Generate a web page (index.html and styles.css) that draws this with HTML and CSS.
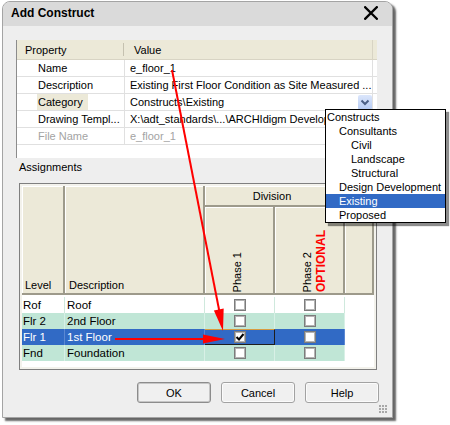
FILE: index.html
```html
<!DOCTYPE html>
<html>
<head>
<meta charset="utf-8">
<link rel="stylesheet" href="styles.css">
</head>
<body>
<div class="window">
  <div class="titlebar">
    <span class="title">Add Construct</span>
    <svg class="close" width="14" height="14" viewBox="0 0 14 14"><path d="M1.2 1.2L12.8 12.8M12.8 1.2L1.2 12.8" stroke="#000" stroke-width="2.3" stroke-linecap="square"/></svg>
  </div>
  <div class="content">
    <div class="pgrid">
      <div class="prow phead"><div class="pc1">Property</div><div class="pc2">Value</div></div>
      <div class="prow"><div class="pc1">Name</div><div class="pc2">e_floor_1</div></div>
      <div class="prow"><div class="pc1">Description</div><div class="pc2">Existing First Floor Condition as Site Measured ...</div></div>
      <div class="prow"><div class="pc1"><span class="hl">Category</span></div><div class="pc2"><span>Constructs\Existing</span><span class="ddbtn"><svg width="14" height="15" viewBox="0 0 14 15"><path d="M3.5 5.5L7 9L10.5 5.5" fill="none" stroke="#4b5f86" stroke-width="2"/></svg></span></div></div>
      <div class="prow"><div class="pc1">Drawing Templ...</div><div class="pc2"><span class="clip">X:\adt_standards\...\ARCHIdigm Development</span></div></div>
      <div class="prow dis"><div class="pc1">File Name</div><div class="pc2">e_floor_1</div></div>
    </div>
    <div class="alabel">Assignments</div>
    <div class="atable">
      <div class="ainner">
        <div class="ahead">
          <div class="hc hlevel">Level</div>
          <div class="hc hdesc">Description</div>
          <div class="hc hdiv">Division</div>
          <div class="hc hph"><span class="vt">Phase 1</span></div>
          <div class="hc hph"><span class="vt">Phase 2</span><span class="vt opt">OPTIONAL</span></div>
          <div class="hc hx"></div>
        </div>
        <div class="arows">
          <div class="arow white">
            <div class="c clev">Rof</div><div class="c cdesc">Roof</div>
            <div class="c cph"><span class="cb"></span></div><div class="c cph"><span class="cb"></span></div><div class="cx"></div>
          </div>
          <div class="arow green">
            <div class="c clev">Flr 2</div><div class="c cdesc">2nd Floor</div>
            <div class="c cph"><span class="cb"></span></div><div class="c cph"><span class="cb"></span></div><div class="cx"></div>
          </div>
          <div class="arow sel">
            <div class="c clev">Flr 1</div><div class="c cdesc">1st Floor</div>
            <div class="c cph focus"><span class="cb"><svg width="10" height="10" viewBox="0 0 10 10"><path d="M1.5 5L4 7.5L8.5 2" fill="none" stroke="#000" stroke-width="2"/></svg></span></div><div class="c cph"><span class="cb"></span></div><div class="cx"></div>
          </div>
          <div class="arow green">
            <div class="c clev">Fnd</div><div class="c cdesc">Foundation</div>
            <div class="c cph"><span class="cb"></span></div><div class="c cph"><span class="cb"></span></div><div class="cx"></div>
          </div>
        </div>
      </div>
    </div>
    <div class="buttons">
      <div class="btn def">OK</div>
      <div class="btn">Cancel</div>
      <div class="btn">Help</div>
    </div>
    <svg class="grip" width="9" height="10" viewBox="0 0 9 10">
      <g fill="#a8a8a8">
        <rect x="0" y="0" width="2" height="2"/><rect x="3" y="0" width="2" height="2"/><rect x="6" y="0" width="2" height="2"/>
        <rect x="0" y="3" width="2" height="2"/><rect x="3" y="3" width="2" height="2"/><rect x="6" y="3" width="2" height="2"/>
        <rect x="0" y="6" width="2" height="2"/><rect x="3" y="6" width="2" height="2"/><rect x="6" y="6" width="2" height="2"/>
      </g>
    </svg>
  </div>
</div>

<div class="popup">
  <div class="item l0">Constructs</div>
  <div class="item l1">Consultants</div>
  <div class="item l2">Civil</div>
  <div class="item l2">Landscape</div>
  <div class="item l2">Structural</div>
  <div class="item l1">Design Development</div>
  <div class="item l1 on">Existing</div>
  <div class="item l1">Proposed</div>
</div>

<svg class="arrows" width="450" height="425" viewBox="0 0 450 425">
  <line x1="172" y1="70" x2="219.5" y2="312" stroke="#ff0000" stroke-width="2"/>
  <polygon points="223.7,308.4 223,331 213.9,310.4" fill="#ff0000"/>
  <line x1="115" y1="339" x2="205" y2="339" stroke="#ff0000" stroke-width="2"/>
  <polygon points="203,334.5 225,339 203,343.5" fill="#ff0000"/>
</svg>
</body>
</html>
```

FILE: styles.css
```css
* { box-sizing: border-box; }
html, body { margin: 0; padding: 0; background: #fff; }
body {
  font-family: "Liberation Sans", Arial, sans-serif;
  font-size: 11px;
  color: #000;
  width: 450px;
  height: 425px;
  overflow: hidden;
  position: relative;
}
.window {
  margin: 1px 0 0 2px;
  width: 391px;
  height: 417px;
  border: 1px solid #a4a4a4;
  border-radius: 8px 8px 0 0;
  background: #eeeeee;
  box-shadow: 3px 3px 2px rgba(0,0,0,0.6);
  display: flex;
  flex-direction: column;
}
.titlebar {
  height: 24px;
  flex: none;
  background: #dadada;
  border-radius: 7px 7px 0 0;
  display: flex;
  justify-content: space-between;
  align-items: flex-start;
  padding: 4px 14px 0 8px;
}
.title { font-weight: bold; font-size: 12px; line-height: 14px; }
.close { display: block; }
.content {
  flex: 1;
  display: flex;
  flex-direction: column;
  align-items: flex-start;
  padding: 0 15px 0 13px;
}
/* property grid */
.pgrid {
  margin-top: 14px;
  width: 361px;
  height: 118px;
  background: #fff;
  border-left: 1px solid #8c8c8c;
  flex: none;
}
.prow { display: flex; height: 17px; border-bottom: 1px solid #e0e0e0; }
.phead { height: 20px; background: #ece9d8; border-bottom: 1px solid #d8d4c4; }
.pc1 {
  width: 108px;
  padding-left: 21px;
  display: flex;
  align-items: center;
  border-right: 1px solid #e0e0e0;
  white-space: nowrap;
}
.pc2 {
  width: 248px;
  padding-left: 5px;
  display: flex;
  align-items: center;
  border-right: 1px solid #e0e0e0;
  white-space: nowrap;
  overflow: hidden;
}
.clip { display: block; max-width: 195px; overflow: hidden; white-space: nowrap; }
.phead .pc1 { padding-left: 8px; border-right: none; position: relative; }
.phead .pc1::after {
  content: "";
  position: absolute;
  right: 1px; top: 3px; bottom: 3px;
  width: 1px; background: #c5c1b0;
}
.phead .pc2 { padding-left: 9px; border-right: 1px solid #d8d4c4; }
.hl { background: #ece9d8; align-self: stretch; display: flex; align-items: center; padding: 0 5px 0 1px; margin-left: -1px; }
.dis { color: #a3a3a3; }
.ddbtn {
  margin-left: auto;
  width: 14px;
  height: 15px;
  background: linear-gradient(#dbe6fb, #b6cbf4);
  border-radius: 2px;
  flex: none;
}
.ddbtn svg { display: block; }
/* assignments */
.alabel { margin: 3px 0 0 3px; line-height: 13px; }
.atable {
  margin: 9px 0 0 3px;
  width: 358px;
  height: 187px;
  border: 1px solid #7f7f7f;
  padding: 2px;
  background: #f3f2ec;
  flex: none;
}
.ainner { background: #fff; height: 100%; }
.ahead {
  display: grid;
  grid-template-columns: 43px 140px 70px 70px 29px;
  grid-template-rows: 21px 88px;
}
.hc {
  background: #ece9d8;
  border-right: 2px solid #9d9a8b;
  border-bottom: 2px solid #9d9a8b;
  box-shadow: inset 1px 1px 0 #fff;
}
.hlevel { grid-row: 1 / 3; grid-column: 1; display: flex; align-items: flex-end; padding: 0 0 2px 3px; }
.hdesc { grid-row: 1 / 3; grid-column: 2; display: flex; align-items: flex-end; padding: 0 0 2px 4px; }
.hdiv { grid-row: 1; grid-column: 3 / 6; display: flex; align-items: center; justify-content: center; padding-right: 33px; }
.hph { display: flex; align-items: flex-end; padding: 0 0 1px 26px; gap: 2px; }
.vt { writing-mode: vertical-rl; transform: rotate(180deg); line-height: 12px; white-space: nowrap; }
.opt { color: #ff0000; font-weight: bold; font-size: 12px; line-height: 13px; }
.arows { padding-top: 2px; }
.arow { display: grid; grid-template-columns: 43px 140px 70px 70px 29px; height: 16px; font-size: 11.5px; }
.c { border-right: 1px solid #cfe9dd; display: flex; align-items: center; white-space: nowrap; }
.clev { padding-left: 1px; }
.cdesc { padding-left: 2px; }
.cph { justify-content: center; }
.green .c { background: #c0e6d6; border-right-color: #d8f0e6; }
.sel .c { background: #316ac5; color: #fff; border-right-color: #5b88d2; }
.focus { border-top: 1px solid #d89c40; border-right: 1px solid #1e1e1e !important; border-bottom: 1px solid #1e1e1e; }
.cb {
  width: 12px; height: 12px;
  background: #fff;
  border: 1px solid #7c7c7c;
  box-shadow: inset 0 0 0 1px #b4b4b4;
  display: flex; align-items: center; justify-content: center;
}
.cb svg { display: block; }
/* buttons */
.buttons {
  align-self: stretch;
  display: flex;
  justify-content: flex-end;
  gap: 10px;
  margin: 12px -2px 0 0;
}
.btn {
  width: 74px; height: 21px;
  border: 1px solid #a2a2a2;
  border-radius: 3px;
  background: #f0f0f0;
  display: flex; align-items: center; justify-content: center;
  box-shadow: inset 0 0 0 1px #fbfbfb;
}
.btn.def { border-color: #8c8c8c; box-shadow: inset 0 0 0 1px #c6c6c6; }
.grip { align-self: flex-end; margin: 2px -11px 0 0; display: block; }
/* popup */
.popup {
  position: absolute;
  left: 325px; top: 109px;
  width: 121px;
  border: 1px solid #000;
  background: #fff;
  box-shadow: 3px 3px 1px rgba(0,0,0,0.45);
}
.item { height: 14px; line-height: 14px; white-space: nowrap; }
.l0 { padding-left: 1px; }
.l1 { padding-left: 13px; }
.l2 { padding-left: 25px; }
.item.on { background: #316ac5; color: #fff; }
.arrows { position: absolute; left: 0; top: 0; pointer-events: none; }
```
